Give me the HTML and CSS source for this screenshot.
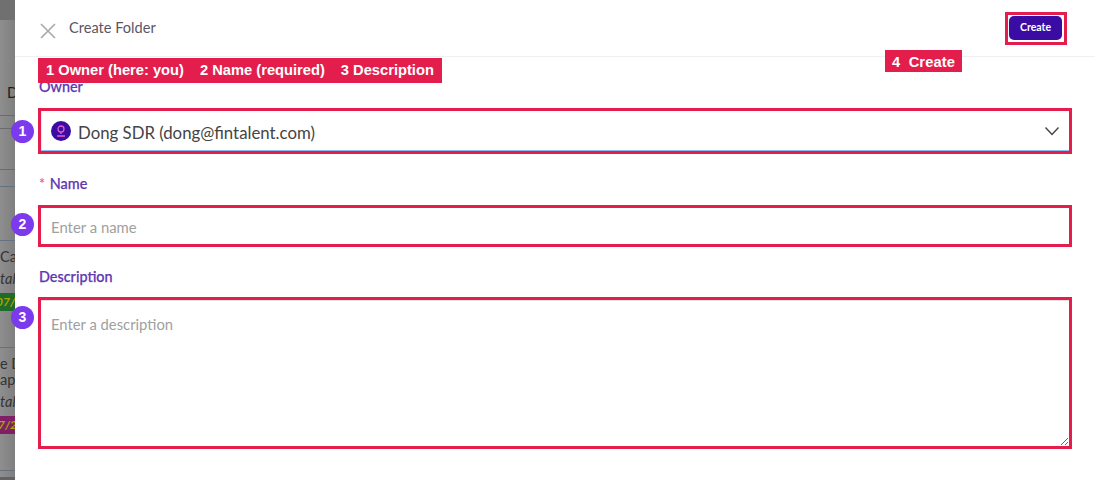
FILE: index.html
```html
<!DOCTYPE html>
<html lang="en">
  <head>
    <meta charset="UTF-8" />
    <title>Create Folder</title>
    <link rel="stylesheet" href="styles.css">
  </head>
  <body>
    <!-- Page behind the drawer, mostly covered -->
    <div class="backdrop">
      <div class="back-band"></div>
      <div class="back-title"><span class="back-menu"></span><span class="back-letter">D</span></div>
      <div class="back-rule rule-a"></div>
      <div class="back-rule rule-b"></div>
      <div class="back-rule rule-c"></div>
      <div class="back-rule rule-d"></div>
      <div class="back-rule rule-e"></div>
      <div class="back-text text-a">Cap</div>
      <div class="back-text back-italic">tal</div>
      <div class="back-badge badge-green">07/2</div>
      <div class="back-rule rule-f"></div>
      <div class="back-text text-b">e De</div>
      <div class="back-text">ape</div>
      <div class="back-text back-italic">tal</div>
      <div class="back-badge badge-purple">7/20</div>
      <div class="back-rule rule-g"></div>
      <div class="back-foot"></div>
    </div>

    <!-- Drawer -->
    <div class="drawer">
      <header class="drawer-head">
        <div class="head-left">
          <svg class="close-icon" width="16" height="16" viewBox="0 0 16 16">
            <path d="M1 1 L15 15 M15 1 L1 15" stroke="#a8a8a8" stroke-width="1.6" fill="none" />
          </svg>
          <span class="drawer-title">Create Folder</span>
        </div>
        <div class="create-mark">
          <button class="create-btn">Create</button>
        </div>
      </header>

      <form class="folder-form">
        <label class="field-label owner-label">Owner</label>
        <div class="owner-select marked">
          <span class="owner-avatar">
            <svg width="12" height="14" viewBox="0 0 12 14">
              <circle cx="6" cy="5" r="3" stroke="#e85ad0" stroke-width="1.3" fill="none" />
              <path d="M6 8 V10 M2 12 H10" stroke="#e85ad0" stroke-width="1.3" fill="none" />
            </svg>
          </span>
          <span class="owner-name">Dong SDR (dong@fintalent.com)</span>
          <svg class="chevron" width="16" height="10" viewBox="0 0 16 10">
            <path d="M1.5 1.5 L8 8.5 L14.5 1.5" stroke="#444" stroke-width="1.4" fill="none" />
          </svg>
        </div>

        <label class="field-label name-label"><span class="required">*</span> Name</label>
        <input class="text-input marked" type="text" placeholder="Enter a name" />

        <label class="field-label desc-label">Description</label>
        <textarea class="text-area marked" placeholder="Enter a description"></textarea>
      </form>
    </div>

    <!-- Annotations on top of the screenshot -->
    <div class="note note-fields">
      <span>1 Owner (here: you)</span><span>2 Name (required)</span><span>3 Description</span>
    </div>
    <div class="note note-create">4&nbsp; Create</div>
    <span class="step step-1">1</span>
    <span class="step step-2">2</span>
    <span class="step step-3">3</span>
  </body>
</html>
```

FILE: styles.css
```css
/* Basic Reset */
* {
  margin: 0;
  padding: 0;
  box-sizing: border-box;
}

body {
  display: flex;
  width: 1095px;
  height: 480px;
  overflow: hidden;
  font-family: Lato, "Liberation Sans", sans-serif;
  background-color: white;
}

/* Backdrop */
.backdrop {
  width: 15px;
  height: 480px;
  overflow: hidden;
  flex-shrink: 0;
  background: linear-gradient(90deg, #8e8e8e, #7f7f7f);
  font-family: Lato, "Liberation Sans", Arial, sans-serif;
  font-size: 14.5px;
  color: #333;
  display: flex;
  flex-direction: column;
}

.back-band {
  height: 20px;
  flex-shrink: 0;
  background-color: #707070;
}

.back-title {
  display: flex;
  align-items: center;
  gap: 7px;
  margin-top: 65px;
  height: 14px;
  flex-shrink: 0;
}

.back-menu {
  width: 3px;
  height: 10px;
  background: repeating-linear-gradient(#222 0 2px, transparent 2px 4px);
}

.back-letter {
  color: #1c1c1c;
}

.back-rule {
  width: 15px;
  height: 1px;
  flex-shrink: 0;
  background-color: #6a6a6a;
}

.rule-a {
  margin-top: 16px;
}
.rule-b {
  margin-top: 12px;
}
.rule-c {
  margin-top: 40px;
}
.rule-d {
  margin-top: 16px;
  background-color: #64727f;
}
.rule-e {
  margin-top: 53px;
  background-color: #64727f;
}
.rule-f {
  margin-top: 36px;
  background-color: #64727f;
}
.rule-g {
  margin-top: 36px;
  background-color: #64727f;
}

.back-text {
  white-space: nowrap;
  height: 16px;
  line-height: 16px;
  flex-shrink: 0;
}

.text-a,
.text-b {
  margin-top: 8px;
}

.back-italic {
  font-style: italic;
  margin-top: 6px;
}

.back-badge {
  height: 18px;
  line-height: 18px;
  margin-top: 6px;
  font-size: 12px;
  font-weight: bold;
  font-style: italic;
  white-space: nowrap;
  flex-shrink: 0;
  color: #a8a400;
}

.badge-green {
  background-color: #1f6b2a;
  text-indent: -4px;
}

.badge-purple {
  background-color: #7f1f66;
  text-indent: -2px;
}

.back-foot {
  margin-top: 6px;
  flex: 1;
  background-color: #636363;
}

/* Drawer */
.drawer {
  flex: 1;
  background-color: white;
}

.drawer-head {
  height: 57px;
  display: flex;
  justify-content: space-between;
  align-items: flex-start;
  padding: 12px 29px 0 25px;
  border-bottom: 1px solid #f0f0f0;
}

.head-left {
  display: flex;
  align-items: flex-start;
  gap: 13px;
  padding-top: 4px;
}

.close-icon {
  margin-top: 7px;
}

.drawer-title {
  font-size: 14.6px;
  line-height: 24px;
  color: #5a5566;
}

.create-mark {
  width: 62px;
  height: 33px;
  border: 3px solid #e31e4c;
  padding: 1px 2px 2px 1px;
}

.create-btn {
  display: block;
  width: 53px;
  height: 24px;
  padding-bottom: 2px;
  border: none;
  border-radius: 5px;
  background-color: #3a0ca3;
  color: white;
  font-family: inherit;
  font-size: 10.5px;
  font-weight: bold;
}

/* Form */
.folder-form {
  display: flex;
  flex-direction: column;
  align-items: flex-start;
  padding: 0 24px;
}

.field-label {
  font-size: 14.4px;
  font-weight: 500;
  color: #6237b0;
  line-height: 18px;
  -webkit-text-stroke: 0.25px #6237b0;
}

.owner-label {
  margin-top: 21px;
}

.name-label {
  margin-top: 21px;
}

.desc-label {
  margin-top: 21px;
}

.required {
  color: #f0506e;
  -webkit-text-stroke: 0;
  margin-right: 1px;
}

/* Red marking drawn around the controls */
.marked {
  width: 1034px;
  border: 3px solid #e31e4c;
  margin-left: -1px;
}

.owner-select {
  height: 46px;
  margin-top: 12px;
  display: flex;
  align-items: center;
  padding: 0 9px 0 10px;
  box-shadow: inset 0 -1px 0 #8dbcf0, inset 1px 0 0 #e4eef8;
}

.owner-avatar {
  width: 20px;
  height: 20px;
  border-radius: 50%;
  background-color: #3a0ca3;
  display: flex;
  align-items: center;
  justify-content: center;
  margin-right: 7px;
}

.owner-name {
  flex: 1;
  padding-top: 2px;
  font-size: 16.8px;
  color: #444;
}

.text-input {
  height: 42px;
  margin-top: 12px;
  padding: 1px 10px 0;
  font-family: inherit;
  font-size: 14.9px;
  color: #444;
  outline: none;
}

.text-area {
  height: 152px;
  margin-top: 11px;
  padding: 15px 10px;
  font-family: inherit;
  font-size: 14.8px;
  outline: none;
  resize: both;
  box-shadow: inset 0 1px 0 #e0e0e0;
}

.text-input::placeholder,
.text-area::placeholder {
  color: #a0a0a0;
}

/* Annotations */
.note {
  position: absolute;
  background-color: #e31e4c;
  color: white;
  font-family: "Liberation Sans", Arial, sans-serif;
  font-weight: bold;
  font-size: 14.7px;
  white-space: nowrap;
}

.note-fields {
  left: 38px;
  top: 58px;
  height: 25px;
  line-height: 25px;
  padding: 0 8px;
  display: flex;
  gap: 16px;
}

.note-create {
  left: 885px;
  top: 50px;
  height: 22px;
  line-height: 24px;
  padding: 0 7px;
  letter-spacing: 0.1px;
}

.step {
  position: absolute;
  left: 11px;
  width: 23px;
  height: 23px;
  border-radius: 50%;
  background-color: #7c3aed;
  color: white;
  font-family: "Liberation Sans", Arial, sans-serif;
  font-weight: bold;
  font-size: 14px;
  line-height: 23px;
  text-align: center;
}

.step-1 {
  top: 120px;
}
.step-2 {
  top: 213px;
}
.step-3 {
  top: 306px;
}
```
